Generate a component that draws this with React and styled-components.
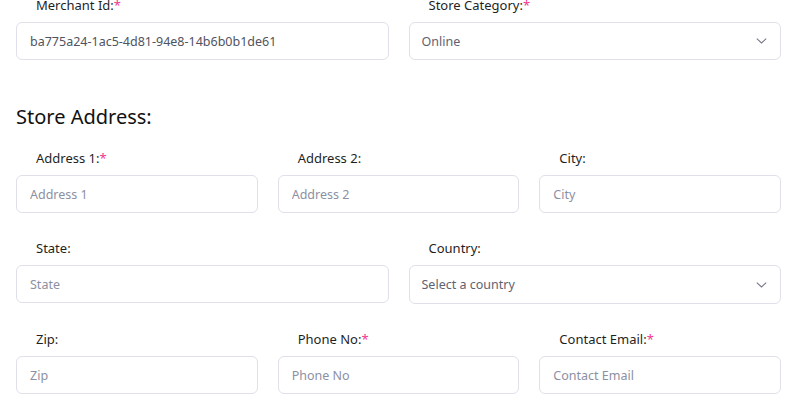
import styled, { createGlobalStyle } from 'styled-components';

const GlobalStyle = createGlobalStyle`
    body {
        margin: 0;
        background: #ffffff;
        font-family: "Noto Sans", "Open Sans", sans-serif;
        color: #1f1f1f;
    }
`;

const StyledPage = styled.div`
    width: 796px;
    padding: 0 15px 0 16px;
    margin-top: -4px;
    box-sizing: border-box;
`;
const StyledRow = styled.div`
    display: grid;
    grid-template-columns: repeat(${({cols}) => cols}, 1fr);
    column-gap: 20px;
    margin-bottom: 26px;
`;
const StyledField = styled.div`
    display: flex;
    flex-direction: column;
`;
const StyledLabel = styled.label`
    font-size: 13px;
    line-height: 18px;
    padding-left: 20px;
    margin-bottom: 8px;
    color: #1f1f1f;
`;
const StyledRequired = styled.span`
    color: #f0388d;
`;
const StyledInput = styled.input`
    height: 38px;
    box-sizing: border-box;
    border: 1px solid #dfe0ea;
    border-radius: 6px;
    padding: 0 13px;
    font-family: inherit;
    font-size: 12.5px;
    color: #505360;
    background: #fff;
    outline: none;

    &::placeholder {
        color: #8d90a2;
    }
`;
const StyledSelectWrap = styled.div`
    position: relative;
`;
const StyledSelect = styled.select`
    width: 100%;
    height: ${({tall}) => tall ? 39 : 38}px;
    box-sizing: border-box;
    border: 1px solid #dfe0ea;
    border-radius: 6px;
    padding: 0 12px;
    font-family: inherit;
    font-size: 12.5px;
    color: #5f6272;
    background: #fff;
    appearance: none;
    outline: none;
`;
const StyledChevron = styled.svg`
    position: absolute;
    right: 14px;
    top: 50%;
    transform: translateY(-50%);
    pointer-events: none;
`;
const StyledHeading = styled.h2`
    margin: 43px 0 18px;
    font-size: 20px;
    line-height: 28px;
    font-weight: 400;
    color: #111;
`;

const Chevron = () => (
    <StyledChevron width="11" height="6" viewBox="0 0 11 6" fill="none">
        <path d="M0.8 0.7 L5.5 5 L10.2 0.7" stroke="#767886" strokeWidth="1.1"/>
    </StyledChevron>
);

const Field = ({label, required, placeholder, value}) => (
    <StyledField>
        <StyledLabel>
            {label}
            {required && <StyledRequired>*</StyledRequired>}
        </StyledLabel>
        <StyledInput placeholder={placeholder} defaultValue={value}/>
    </StyledField>
);

const SelectField = ({label, required, options, tall}) => (
    <StyledField>
        <StyledLabel>
            {label}
            {required && <StyledRequired>*</StyledRequired>}
        </StyledLabel>
        <StyledSelectWrap>
            <StyledSelect tall={tall}>
                {options.map((o) => <option key={o}>{o}</option>)}
            </StyledSelect>
            <Chevron/>
        </StyledSelectWrap>
    </StyledField>
);

const App = () => (
    <StyledPage>
        <GlobalStyle/>
        <StyledRow cols={2} style={{marginBottom: 0}}>
            <Field label="Merchant Id:" required value="ba775a24-1ac5-4d81-94e8-14b6b0b1de61"/>
            <SelectField label="Store Category:" required options={['Online', 'Offline']}/>
        </StyledRow>
        <StyledHeading>Store Address:</StyledHeading>
        <StyledRow cols={3}>
            <Field label="Address 1:" required placeholder="Address 1"/>
            <Field label="Address 2:" placeholder="Address 2"/>
            <Field label="City:" placeholder="City"/>
        </StyledRow>
        <StyledRow cols={2}>
            <Field label="State:" placeholder="State"/>
            <SelectField label="Country:" tall options={['Select a country']}/>
        </StyledRow>
        <StyledRow cols={3}>
            <Field label="Zip:" placeholder="Zip"/>
            <Field label="Phone No:" required placeholder="Phone No"/>
            <Field label="Contact Email:" required placeholder="Contact Email"/>
        </StyledRow>
    </StyledPage>
);

export default App;
